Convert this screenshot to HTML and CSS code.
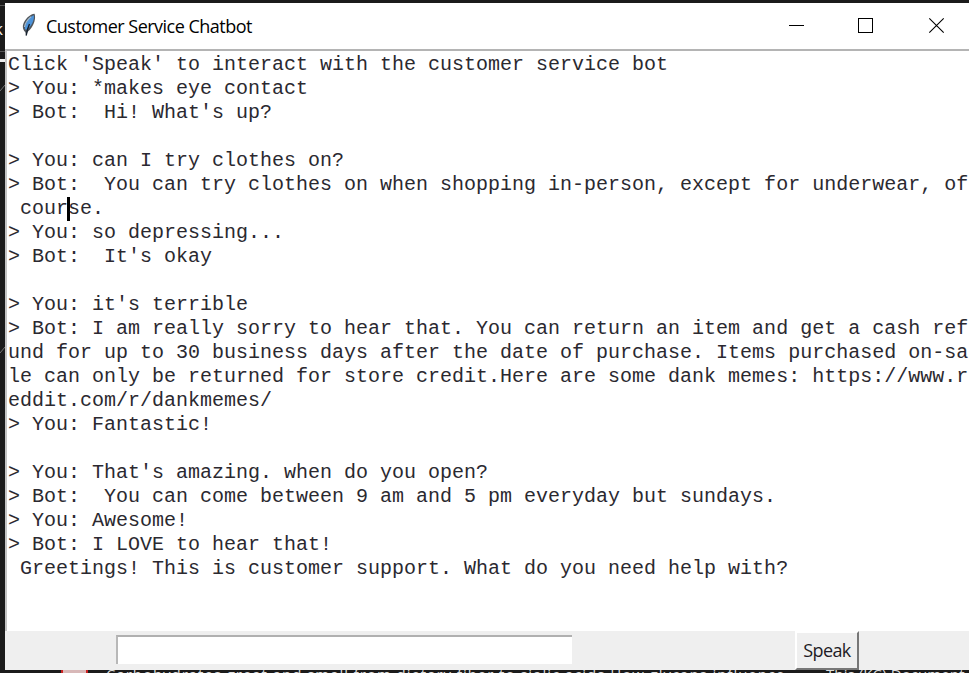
FILE: index.html
```
<!DOCTYPE html>
<html lang="en">
<head>
<meta charset="utf-8">
<title>Customer Service Chatbot</title>
<link rel="stylesheet" href="styles.css">
</head>
<body>
<div class="desktop">
  <div class="gutter">
    <span class="gutter-letter">k</span>
    <svg width="5" height="673" viewBox="0 0 5 673"><path d="M0 5.5H5M0 51.5H5" stroke="#555"/><path d="M0 60.5H5" stroke="#eee" stroke-width="3"/><path d="M0 91L5 85M0 353L5 347" stroke="#777"/></svg>
  </div>
  <main class="window">
    <header class="titlebar">
      <svg class="feather" width="14" height="24" viewBox="0 0 14 24"><path d="M12.600 .8C8 1.200 2.600 6 1 12C.5 15 1.300 17 3.200 19L4.300 23L5.400 19C10.500 15 14.500 7 12.600 .8Z" fill="#50565c"/><path d="M11.800 2.200C7.500 4 3.500 8.500 2.700 15.500L4 17C8.500 14.500 12.800 7.500 11.800 2.200Z" fill="#4c93da"/><path d="M9.200 3.600C5.500 6.500 3.200 10 2.500 14" fill="none" stroke="#a9bccb" stroke-width="1.200"/><path d="M7.500 11C6 14 5 17 4.200 22.500" fill="none" stroke="#15202e" stroke-width="1.400"/></svg>
      <h1 class="title">Customer Service Chatbot</h1>
      <svg class="controls" width="160" height="20" viewBox="0 0 160 20" fill="none" stroke="#000"><path d="M2 9.500H17"/><rect x="71.500" y="2.500" width="14" height="14"/><path d="M142.300 2.300L156.700 16.700M156.700 2.300L142.300 16.700" stroke-width="1.100"/></svg>
    </header>
    <pre class="log">Click 'Speak' to interact with the customer service bot
&gt; You: *makes eye contact
&gt; Bot:  Hi! What's up?

&gt; You: can I try clothes on?
&gt; Bot:  You can try clothes on when shopping in-person, except for underwear, of
 cour<span class="caret"></span>se.
&gt; You: so depressing...
&gt; Bot:  It's okay

&gt; You: it's terrible
&gt; Bot: I am really sorry to hear that. You can return an item and get a cash ref
und for up to 30 business days after the date of purchase. Items purchased on-sa
le can only be returned for store credit.Here are some dank memes: https://www.r
eddit.com/r/dankmemes/
&gt; You: Fantastic!

&gt; You: That's amazing. when do you open?
&gt; Bot:  You can come between 9 am and 5 pm everyday but sundays.
&gt; You: Awesome!
&gt; Bot: I LOVE to hear that!
 Greetings! This is customer support. What do you need help with?</pre>
    <footer class="toolbar">
      <div class="entry"></div>
      <div class="speak"><span>Speak</span></div>
    </footer>
  </main>
  <div class="behind">
    <span class="badge"></span>
    <span class="behind-main">Carbohydrates great and small from dietary fiber to sialic acids How glycans influence</span>
    <span class="behind-side">This (KC) Document</span>
  </div>
</div>
</body>
</html>
```
FILE: styles.css
```
* { box-sizing: border-box; }
body { margin: 0; }
.desktop {
  width: 969px;
  height: 673px;
  overflow: hidden;
  background: #1b1b1b;
  display: grid;
  grid-template-columns: 5px 964px;
  grid-template-rows: 670px 3px;
}
.gutter { position: relative; height: 673px; overflow: hidden; }
.gutter svg { display: block; }
.gutter-letter {
  position: absolute;
  left: -6px;
  top: 18px;
  font: 17px/22px "Open Sans", sans-serif;
  color: #eee;
}
.window {
  margin-top: 3px;
  height: 667px;
  background: #fff;
  display: flex;
  flex-direction: column;
}
.titlebar {
  height: 46px;
  display: flex;
  align-items: center;
  padding: 0 24px 0 17px;
}
.feather { margin-top: -3px; flex: none; }
.title {
  margin: 0 auto 0 10px;
  font: 400 18px/24px "Open Sans", sans-serif;
  color: #000;
  letter-spacing: -0.52px;
  white-space: nowrap;
}
.controls { flex: none; margin-right: -2px; }
.log {
  margin: 0;
  height: 582px;
  border-top: 2px solid #b4b4b4;
  border-left: 2px solid #c4c4c4;
  padding: 2px 0 0 1px;
  font: 20px/24px "Liberation Mono", monospace;
  color: #2b2930;
  overflow: hidden;
}
.caret {
  display: inline-block;
  width: 3px;
  height: 24px;
  margin: 0 -2px 0 -1px;
  vertical-align: top;
  background: #000;
}
.toolbar {
  flex: 1;
  background: #efefef;
  display: flex;
  align-items: flex-start;
  padding-left: 111px;
}
.entry {
  margin-top: 4px;
  width: 456px;
  height: 29px;
  background: #fff;
  border-top: 2px solid #b0b0b0;
  border-left: 2px solid #b8b8b8;
}
.speak {
  margin-left: 223px;
  width: 64px;
  height: 39px;
  border: 2px solid #fff;
  border-right: 2px solid #777;
  border-bottom: 2px solid #777;
  display: flex;
  align-items: center;
  justify-content: center;
  padding-bottom: 2px;
  font: 18px/24px "Open Sans", sans-serif;
  letter-spacing: -0.6px;
  color: #1e1b25;
}
.behind {
  grid-column: 2;
  height: 3px;
  overflow: hidden;
  display: flex;
  font: 15px/20px "Open Sans", sans-serif;
  color: #ddd;
  white-space: nowrap;
}
.badge {
  width: 27px;
  height: 3px;
  margin: 0 18px 0 56px;
  background: #d8b8b8;
  border: solid #c22;
  border-width: 0 2px;
  flex: none;
}
.behind-main, .behind-side { margin-top: -6px; flex: none; }
.behind-main { width: 720px; letter-spacing: 0.96px; }
.behind-side { letter-spacing: 0.1px; }
```
